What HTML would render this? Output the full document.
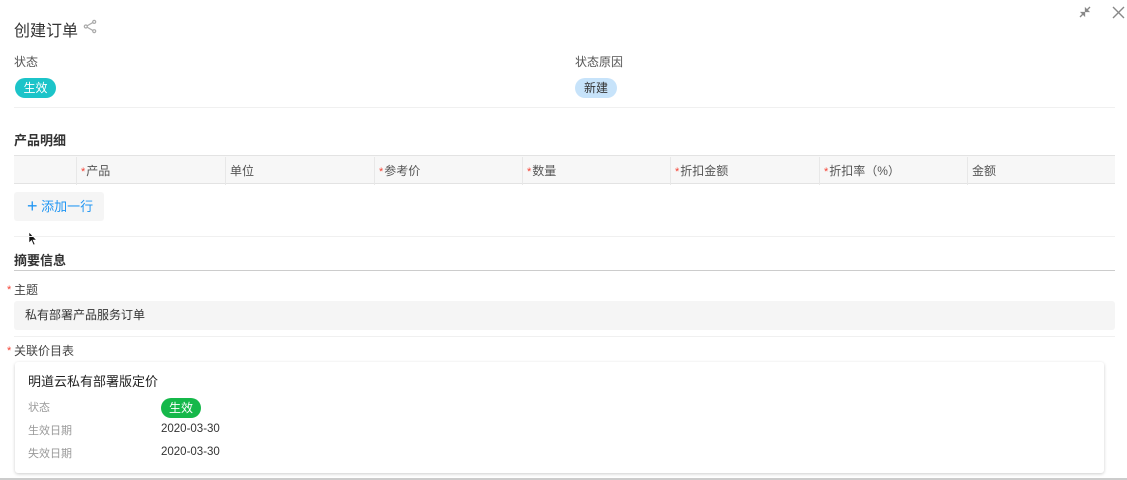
<!DOCTYPE html>
<html><head><meta charset="utf-8"><style>
*{margin:0;padding:0;box-sizing:border-box}
body{width:1127px;height:480px;background:#fff;font-family:"Liberation Sans","Noto Sans CJK SC",sans-serif;color:#333;position:relative;overflow:hidden}
.a{position:absolute}
.lbl{font-size:12px;color:#555}
.req:before{content:"*";color:#f44336;position:absolute;left:-7px;top:3px;font-size:11px}
.th{position:absolute;top:156px;height:28px;line-height:28px;font-size:12px;color:#555;border-left:1px solid #e8e8e8;padding-left:4px}
.th.r:before{content:"*";color:#f44336;font-size:11px;margin-right:1px}
</style></head><body>
<div class="a" style="left:14px;top:17px;font-size:16px;color:#333">创建订单</div>
<svg class="a" style="left:83px;top:19px" width="14" height="15" viewBox="0 0 15 15"><g fill="none" stroke="#aaa" stroke-width="1.3"><circle cx="12" cy="2.5" r="1.6"/><circle cx="3" cy="7.5" r="1.6"/><circle cx="12" cy="12.5" r="1.6"/><path d="M4.5 6.7L10.5 3.3M4.5 8.3L10.5 11.7"/></g></svg>
<svg class="a" style="left:1078px;top:5px" width="14" height="14" viewBox="0 0 14 14"><g stroke="#888" stroke-width="1.3" fill="#888"><path d="M2 12L6 8"/><path d="M3.5 7.5H6.5V10.5Z"/><path d="M12 2L8 6"/><path d="M7.5 3.5V6.5H10.5Z"/></g></svg>
<svg class="a" style="left:1112px;top:6px" width="13" height="13" viewBox="0 0 13 13"><path d="M1 1L12 12M12 1L1 12" stroke="#888" stroke-width="1.4"/></svg>

<div class="a lbl" style="left:14px;top:53px">状态</div>
<div class="a" style="left:15px;top:78px;width:41px;height:20px;border-radius:10px;background:#1cc4c9;color:#fff;font-size:12px;text-align:center;line-height:20px">生效</div>
<div class="a lbl" style="left:575px;top:53px">状态原因</div>
<div class="a" style="left:575px;top:78px;width:42px;height:20px;border-radius:10px;background:#c7e3fa;color:#333;font-size:12px;text-align:center;line-height:20px">新建</div>
<div class="a" style="left:14px;top:107px;width:1101px;height:1px;background:#f0f0f0"></div>

<div class="a" style="left:14px;top:130px;font-size:13px;font-weight:bold;color:#333">产品明细</div>
<div class="a" style="left:14px;top:155px;width:1101px;height:29px;background:#f7f7f7;border-top:1px solid #e3e3e3;border-bottom:1px solid #e3e3e3"></div>
<div class="th r" style="left:76px;top:157px">产品</div>
<div class="th" style="left:225px;top:157px">单位</div>
<div class="th r" style="left:374px;top:157px">参考价</div>
<div class="th r" style="left:522px;top:157px">数量</div>
<div class="th r" style="left:670px;top:157px">折扣金额</div>
<div class="th r" style="left:819px;top:157px">折扣率（%）</div>
<div class="th" style="left:967px;top:157px">金额</div>
<div class="a" style="left:14px;top:192px;width:90px;height:29px;background:#f5f5f5;border-radius:3px;color:#2196f3;font-size:13px;line-height:29px;padding-left:13px"><span style="font-size:18px;vertical-align:-1px">+</span> 添加一行</div>
<svg class="a" style="left:28px;top:231px" width="10" height="15" viewBox="0 0 10 15"><path d="M1 1V12L3.5 9.5L5.5 14L7 13.3L5 9H8.5Z" fill="#111" stroke="#fff" stroke-width=".6"/></svg>
<div class="a" style="left:14px;top:236px;width:1101px;height:1px;background:#f0f0f0"></div>

<div class="a" style="left:14px;top:250px;font-size:13px;font-weight:bold;color:#333">摘要信息</div>
<div class="a" style="left:14px;top:270px;width:1101px;height:1px;background:#ccc"></div>
<div class="a lbl req" style="left:14px;top:281px;color:#444">主题</div>
<div class="a" style="left:14px;top:301px;width:1101px;height:29px;background:#f5f5f5;border-radius:3px;font-size:12px;line-height:29px;padding-left:11px;color:#333">私有部署产品服务订单</div>
<div class="a" style="left:14px;top:336px;width:1101px;height:1px;background:#f0f0f0"></div>
<div class="a lbl req" style="left:14px;top:342px;color:#444">关联价目表</div>
<div class="a" style="left:15px;top:362px;width:1089px;height:111px;background:#fff;border-radius:3px;box-shadow:0 1px 3px rgba(0,0,0,.2)"></div>
<div class="a" style="left:28px;top:371px;font-size:13px;color:#222">明道云私有部署版定价</div>
<div class="a" style="left:28px;top:399px;font-size:11px;color:#999">状态</div>
<div class="a" style="left:161px;top:398px;width:40px;height:20px;border-radius:10px;background:#15b84a;color:#fff;font-size:12px;text-align:center;line-height:20px">生效</div>
<div class="a" style="left:28px;top:422px;font-size:11px;color:#999">生效日期</div>
<div class="a" style="left:161px;top:423px;font-size:11.5px;color:#333">2020-03-30</div>
<div class="a" style="left:28px;top:445px;font-size:11px;color:#999">失效日期</div>
<div class="a" style="left:161px;top:446px;font-size:11.5px;color:#333">2020-03-30</div>
<div class="a" style="left:0;top:478px;width:1127px;height:2px;background:#ccc"></div>
</body></html>
